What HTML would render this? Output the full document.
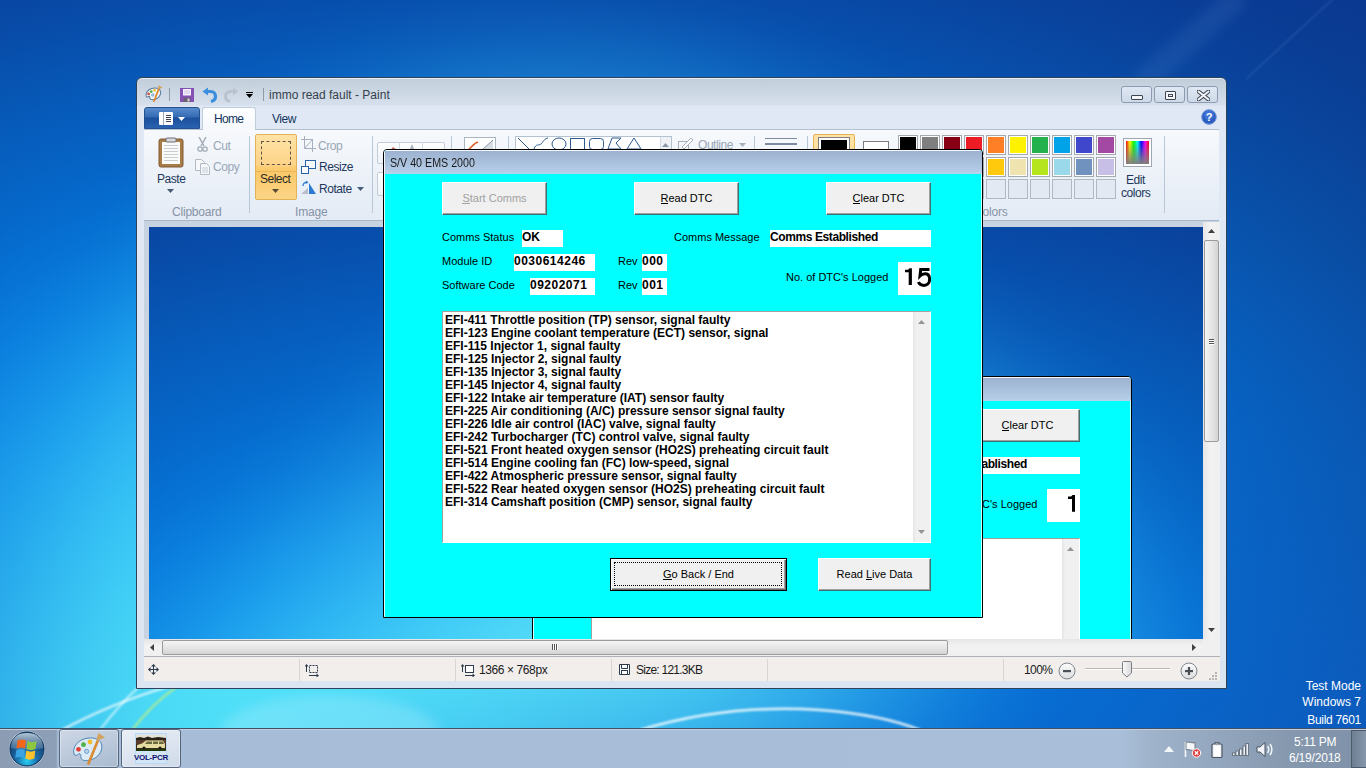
<!DOCTYPE html>
<html><head><meta charset="utf-8">
<style>
*{box-sizing:border-box;margin:0;padding:0}
html,body{width:1366px;height:768px;overflow:hidden;font-family:"Liberation Sans",sans-serif}
body{position:relative;background:#0b4fa8}
.a{position:absolute}
.deskbg{position:absolute;left:0;top:0;width:1366px;height:768px;overflow:hidden;
background:
 radial-gradient(ellipse 434px 606px at 197px 765px, rgba(101,255,254,0.733) 0%, rgba(101,255,254,0.700) 15%, rgba(101,255,254,0.607) 30%, rgba(101,255,254,0.466) 45%, rgba(101,255,254,0.300) 60%, rgba(101,255,254,0.191) 70%, rgba(101,255,254,0.095) 80%, rgba(101,255,254,0.037) 88%, rgba(101,255,254,0.010) 94%, rgba(101,255,254,0.000) 100%),
 radial-gradient(ellipse 549px 525px at 567px 487px, rgba(101,235,246,1.000) 0%, rgba(101,235,246,0.956) 15%, rgba(101,235,246,0.828) 30%, rgba(101,235,246,0.636) 45%, rgba(101,235,246,0.410) 60%, rgba(101,235,246,0.260) 70%, rgba(101,235,246,0.130) 80%, rgba(101,235,246,0.051) 88%, rgba(101,235,246,0.014) 94%, rgba(101,235,246,0.000) 100%),
 radial-gradient(ellipse 1353px 689px at 458px 469px, rgba(0,137,247,1.000) 0%, rgba(0,137,247,0.956) 15%, rgba(0,137,247,0.828) 30%, rgba(0,137,247,0.636) 45%, rgba(0,137,247,0.410) 60%, rgba(0,137,247,0.260) 70%, rgba(0,137,247,0.130) 80%, rgba(0,137,247,0.051) 88%, rgba(0,137,247,0.014) 94%, rgba(0,137,247,0.000) 100%),
 linear-gradient(180deg, rgb(10,56,144) 0%, rgb(12,60,140) 33.33%, rgb(14,69,155) 66.67%, rgb(14,84,181) 100%);}
/* paint window */
#pw{left:136px;top:77px;width:1091px;height:612px;border:1px solid #2e425a;border-radius:6px 6px 0 0;
 background:linear-gradient(#c1cdd9 0px,#cad6e2 12px,#d6e0ec 27px,#dfe8f4 28px,#dfe8f4 100px,#dbe5f1 100%);box-shadow:inset 0 1px 0 #e6edf5;overflow:hidden}
.t12{font-size:12px;white-space:nowrap;line-height:14px}
.sep{width:1px;background:#b8c6d6}
#ribbon{left:144px;top:129px;width:1075px;height:92px;border-top:1px solid #b3c0cf;border-bottom:1px solid #a8b8cb;
 background:linear-gradient(#f7f9fc 0%,#eef3f9 40%,#e4ebf5 100%)}
.glabel{color:#8593a6;font-size:12px;white-space:nowrap;letter-spacing:-.2px}
.rtxt{color:#1e395b;font-size:12px;white-space:nowrap;letter-spacing:-.45px}
.gtxt{color:#9aa6b6;font-size:12px;white-space:nowrap;letter-spacing:-.45px}
.sw{position:absolute;width:20px;height:20px;border:1px solid #a5a9ae;background:#fff;padding:1px}
.sw i{display:block;width:16px;height:16px}
.sw.e{background:#e3e9f2;border-color:#b0b8c4}
#canvasarea{left:144px;top:221px;width:1075px;height:436px;background:#c8d3e2}
#canvas{left:149px;top:227px;width:1054px;height:412px;overflow:hidden;background:#0b4fa8}
#vsb{left:1203px;top:222px;width:17px;height:417px;background:linear-gradient(90deg,#e6e6e6,#f2f2f2 40%,#f0f0f0)}
#hsb{left:144px;top:639px;width:1076px;height:17px;background:linear-gradient(#e6e6e6,#f2f2f2 40%,#f0f0f0)}
#status{left:144px;top:656px;width:1076px;height:25px;background:#f1eeec;border-top:1px solid #aeb2b8}
.sdiv{position:absolute;top:2px;width:1px;height:22px;background:#d9d6d2}
.st{position:absolute;top:6px;font-size:12px;color:#1b1b1b;white-space:nowrap}
.wbtn{position:absolute;width:31px;height:17px;border:1px solid #8c9bb0;border-radius:3px;background:linear-gradient(#dfe8f3,#cdd9e8)}
.wbtn i,.wbtn b{position:absolute;display:block;border:1.5px solid #3c4450;background:#f4f6f9}
.wbtn b{border-width:1px}
/* dialog */
.dlg{position:absolute;width:600px;height:469px;border:1px solid #000;border-radius:4px 4px 0 0;background:#00ffff;overflow:hidden}
.dlg .tb{position:absolute;left:0;top:0;width:598px;height:24px;background:linear-gradient(#9cb2d0,#b4cbe6 85%,#b8d4ec);border-top:1px solid #f4f8fc;border-left:1px solid #eef4fa}
.dlg .hl{position:absolute;left:0;top:24px;width:1px;height:445px;background:#d8ffff}
.dlg .hr{position:absolute;right:0;top:24px;width:1px;height:445px;background:#c8ffff}
.dlg .tt{position:absolute;left:6px;top:6px;font-size:12px;color:#1a1a1a;white-space:nowrap;transform:scaleX(.89);transform-origin:0 0}
.btn{position:absolute;height:33px;background:#f0f0f0;border-top:1px solid #fff;border-left:1px solid #fff;border-right:1px solid #3d7070;border-bottom:1px solid #3d7070;
 box-shadow:inset -1px -1px 0 #a0a0a0;font-size:11px;color:#000;text-align:center;line-height:30px;white-space:nowrap}
.btn u{text-decoration:none;border-bottom:1px solid currentColor;line-height:10px;display:inline-block}
.lbl{position:absolute;font-size:11px;color:#000;white-space:nowrap;line-height:12px}
.box{position:absolute;background:#fff;font-size:12px;font-weight:bold;color:#000;white-space:nowrap;line-height:15px;padding-left:0}
.box.n{letter-spacing:.5px}
.lst{position:absolute;background:#fff;border-top:1px solid #a0a0a0;border-left:1px solid #a0a0a0;border-right:1px solid #fff;border-bottom:1px solid #fff;overflow:hidden}
.lst .ln{font-size:12px;font-weight:bold;line-height:13px;white-space:nowrap;padding-left:2px}
.lst .up,.lst .dn{position:absolute;right:5px;width:7px;height:4px}
.lst .sb{position:absolute;right:0;top:0;width:17px;height:100%;background:linear-gradient(90deg,#e4e4e4,#f0f0f0 3px)}
.box.big{font-size:24px;font-weight:normal;-webkit-text-stroke:.7px #000;text-align:right;line-height:30px;padding-right:1px;letter-spacing:0}
.btn.def{border:1px solid #000;box-shadow:inset 1px 1px 0 #fff,inset -1px -1px 0 #696969,inset -2px -2px 0 #a0a0a0}
.focus{position:absolute;left:3px;top:3px;right:4px;bottom:4px;border:1px dotted #000}
.thumbv{border:1px solid #9b9b9b;border-radius:2px;background:linear-gradient(90deg,#f4f4f4,#e6e6e6 50%,#d4d4d4)}
.thumbh{border:1px solid #9b9b9b;border-radius:2px;background:linear-gradient(#f4f4f4,#e6e6e6 50%,#d4d4d4)}
.tbtn{border:1px solid #56667c;border-radius:3px;background:linear-gradient(160deg,#cdd8e6,#a9bad0);box-shadow:inset 0 0 0 1px rgba(255,255,255,.35)}
.tbtn.hi{background:linear-gradient(160deg,#e9eff7,#cfdae8)}
/* taskbar */
#tb{left:0;top:728px;width:1366px;height:40px;background:linear-gradient(90deg,#8b9cb3 0px,#8d9fb6 56px,#a7bcd6 58px,#a9bfd9 1120px,#9fb3cb 1150px,#8598ae 1290px,#7f91a8 100%);border-top:1px solid #3f5068;box-shadow:inset 0 1px 0 #c3cfdc}
.dt{position:absolute;color:#fff;font-size:12px;white-space:nowrap;text-align:right}
</style></head><body>
<div class="deskbg"></div>
<svg class="a" style="left:0;top:0" width="1366" height="728" viewBox="0 0 1366 728">
 <defs><filter id="bl1" x="-20%" y="-20%" width="140%" height="140%"><feGaussianBlur stdDeviation="1.2"/></filter>
 <filter id="bl2" x="-20%" y="-50%" width="140%" height="200%"><feGaussianBlur stdDeviation="6"/></filter></defs>
 <path d="M62 730 C95 712 130 698 170 686" stroke="#fff" stroke-width="2.2" fill="none" opacity=".8" filter="url(#bl1)"/>
 <path d="M100 730 C112 714 124 700 140 686" stroke="#fff" stroke-width="1.8" fill="none" opacity=".7" filter="url(#bl1)"/>
 <path d="M132 730 C146 712 160 698 178 686" stroke="#c8f07a" stroke-width="2" fill="none" opacity=".85" filter="url(#bl1)"/>
 <ellipse cx="330" cy="735" rx="110" ry="40" fill="#a8ecff" opacity=".35" filter="url(#bl2)"/>
 <path d="M640 730 C700 712 760 706 820 710 C860 713 895 720 920 730" stroke="#fff" stroke-width="2.5" fill="none" opacity=".85" filter="url(#bl1)"/>
 <path d="M1246 79 L1334 -2" stroke="#9cc4f0" stroke-width="1" fill="none" opacity=".3" filter="url(#bl1)"/>
 <path d="M1140 85 L1240 -5" stroke="#6fa0e0" stroke-width="24" fill="none" opacity=".12" filter="url(#bl2)"/>
</svg>

<!-- PAINT WINDOW -->
<div id="pw" class="a"></div>
<!-- title bar -->
<svg class="a" style="left:145px;top:85px" width="18" height="17" viewBox="12 4 34 33">
  <path d="M14.5 27 C12 22 15 14 24 11 C32 8.5 40 10.5 41.5 16 C43 21 40 28 33 31 C28 33 22 33.5 21 30 C20.5 28.5 21.5 26.5 20 25.8 C18.5 25.2 17 28.5 14.5 27 Z" fill="#eef5fb" stroke="#5a7a9a" stroke-width="2"/>
  <circle cx="18.5" cy="21.3" r="2.6" fill="#d04a3a"/><circle cx="23.5" cy="16.7" r="2.6" fill="#4fb046"/><circle cx="30" cy="14" r="2.6" fill="#f0bf30"/><circle cx="26.6" cy="23.4" r="2.4" fill="#b8d4ea" stroke="#5b8fc0" stroke-width="1.2"/>
  <path d="M29 35.5 L37.5 13.5" stroke="#e08a2a" stroke-width="3.5" stroke-linecap="round"/>
  <path d="M35.5 13 L38.5 4.5 L45.5 9.5 Z" fill="#d4a25c"/>
 </svg>
<div class="a sep" style="left:169px;top:88px;height:13px;background:#8d9aab"></div>
<svg class="a" style="left:180px;top:88px" width="14" height="14" viewBox="0 0 14 14">
 <rect x="0" y="0" width="14" height="14" fill="#8650b4"/><rect x="3" y="1" width="8" height="6.5" fill="#f4f0fa"/><path d="M4 3h6M4 5h6" stroke="#c8b8dc" stroke-width=".8"/><rect x="3.5" y="9.5" width="7" height="4.5" fill="#6a6070"/><rect x="7.5" y="10.5" width="2" height="3" fill="#d8d0e0"/>
</svg>
<svg class="a" style="left:202px;top:87px" width="16" height="16" viewBox="0 0 16 16">
 <path d="M5 4.5 H8.5 C12 4.5 13.5 7 13.5 9.5 C13.5 12 12 13.8 9 14.5" stroke="#3a8ede" stroke-width="3.2" fill="none"/>
 <path d="M0.5 4.5 L6 0.5 L6 8.5 Z" fill="#3a8ede"/>
</svg>
<svg class="a" style="left:223px;top:87px" width="16" height="16" viewBox="0 0 16 16">
 <path d="M11 4.5 H7.5 C4 4.5 2.5 7 2.5 9.5 C2.5 12 4 13.8 7 14.5" stroke="#b9c3ce" stroke-width="3.2" fill="none"/>
 <path d="M15.5 4.5 L10 0.5 L10 8.5 Z" fill="#b9c3ce"/>
</svg>
<div class="a" style="left:246px;top:92px;width:7px;height:1px;background:#000"></div>
<svg class="a" style="left:246px;top:94px" width="8" height="5"><path d="M0 0 L7 0 L3.5 4 Z" fill="#000"/></svg>
<div class="a sep" style="left:263px;top:88px;height:13px;background:#8d9aab"></div>
<div class="a t12" style="left:269px;top:88px;color:#363f4c">immo read fault - Paint</div>
<div class="a wbtn" style="left:1121px;top:86px"><i style="left:9px;top:8px;width:12px;height:5px;border-radius:1px"></i></div>
<div class="a wbtn" style="left:1154px;top:86px"><i style="left:10px;top:4px;width:11px;height:9px;border-radius:1px"></i><b style="left:13px;top:7px;width:5px;height:3px"></b></div>
<div class="a wbtn" style="left:1187px;top:86px">
 <svg class="a" style="left:9px;top:3px" width="13" height="11" viewBox="0 0 13 11"><path d="M1.5 1.5 L11.5 9.5 M11.5 1.5 L1.5 9.5" stroke="#3c4450" stroke-width="4" stroke-linecap="round"/><path d="M1.5 1.5 L11.5 9.5 M11.5 1.5 L1.5 9.5" stroke="#f4f6f9" stroke-width="2" stroke-linecap="round"/></svg>
</div>
<svg class="a" style="left:1201px;top:109px" width="16" height="16" viewBox="0 0 16 16">
 <circle cx="8" cy="8" r="7.3" fill="#2b5dc2" stroke="#6e95d6" stroke-width="1"/><circle cx="8" cy="6" r="5" fill="#4a7fdc" opacity=".6"/>
 <text x="8" y="12.2" text-anchor="middle" font-family="Liberation Sans" font-weight="bold" font-size="11" fill="#fff">?</text>
</svg>
<!-- tabs -->
<div class="a" style="left:144px;top:107px;width:56px;height:22px;border-radius:3px 3px 0 0;background:linear-gradient(#5a8ccc 0%,#336bb4 45%,#1d4f9c 50%,#2a62b0 100%);border:1px solid #21518f"></div>
<div class="a" style="left:159px;top:112px;width:14px;height:13px;background:#fff;border-radius:1px"></div>
<div class="a" style="left:163px;top:112px;width:1px;height:13px;background:#9ab"></div>
<div class="a" style="left:166px;top:115px;width:5px;height:1px;background:#445"></div>
<div class="a" style="left:166px;top:117px;width:5px;height:1px;background:#445"></div>
<div class="a" style="left:166px;top:119px;width:5px;height:1px;background:#445"></div>
<div class="a" style="left:166px;top:121px;width:5px;height:1px;background:#445"></div>
<svg class="a" style="left:178px;top:117px" width="7" height="4"><path d="M0 0 L7 0 L3.5 4 Z" fill="#fff"/></svg>
<div class="a" style="left:202px;top:107px;width:54px;height:23px;border:1px solid #bfcddd;border-bottom:none;border-radius:3px 3px 0 0;background:linear-gradient(#fdfeff,#f5f8fc)"></div>
<div class="a t12" style="left:214px;top:112px;color:#15355c;letter-spacing:-.7px">Home</div>
<div class="a t12" style="left:272px;top:112px;color:#15355c;letter-spacing:-.5px">View</div>
<!-- ribbon body -->
<div id="ribbon" class="a"></div>
<div class="a" style="left:203px;top:128px;width:52px;height:2px;background:#f7f9fc"></div>
<!-- clipboard group -->
<svg class="a" style="left:158px;top:136px" width="26" height="32" viewBox="0 0 26 32">
 <rect x="1" y="3" width="24" height="28" rx="2" fill="#a87c48" stroke="#7e5a30" stroke-width="1"/>
 <rect x="4" y="6" width="18" height="22" fill="#fbfbf9"/>
 <path d="M6 9.5h14M6 12.5h14M6 15.5h14M6 18.5h14M6 21.5h14M6 24.5h14" stroke="#c9ccd2" stroke-width="1"/>
 <rect x="8" y="2" width="10" height="4" rx="1" fill="#d7d9dd" stroke="#6b6f78" stroke-width="1"/>
</svg>
<div class="a rtxt" style="left:157px;top:172px">Paste</div>
<svg class="a" style="left:167px;top:189px" width="7" height="4"><path d="M0 0 L7 0 L3.5 4 Z" fill="#475b77"/></svg>
<svg class="a" style="left:197px;top:137px" width="11" height="15" viewBox="0 0 11 15">
 <path d="M2 0 L7 9 M9 0 L4 9" stroke="#a3adb9" stroke-width="1.5"/><circle cx="3" cy="12" r="2.2" fill="none" stroke="#a3adb9" stroke-width="1.3"/><circle cx="8" cy="12" r="2.2" fill="none" stroke="#a3adb9" stroke-width="1.3"/>
</svg>
<div class="a gtxt" style="left:213px;top:139px">Cut</div>
<svg class="a" style="left:194px;top:158px" width="17" height="17" viewBox="0 0 17 17">
 <path d="M1.5 1.5h6l3 3v8h-9z" fill="#f6f7f9" stroke="#b2bac5"/><path d="M6.5 5.5h6l3 3v8h-9z" fill="#f6f7f9" stroke="#b2bac5"/><path d="M8 10h6M8 12h6M8 14h6" stroke="#c5ccd5"/>
</svg>
<div class="a gtxt" style="left:213px;top:160px">Copy</div>
<div class="a glabel" style="left:172px;top:205px">Clipboard</div>
<div class="a sep" style="left:249px;top:136px;height:77px"></div>
<!-- image group -->
<div class="a" style="left:255px;top:134px;width:42px;height:66px;border:1px solid #e3b254;border-radius:2px;background:linear-gradient(#fee3a6 0%,#fdd489 45%,#fbc867 55%,#fcd587 100%)"></div>
<div class="a" style="left:256px;top:171px;width:40px;height:1px;background:#e6b660"></div>
<div class="a" style="left:261px;top:141px;width:30px;height:24px;border:1px dashed #5c5548"></div>
<div class="a t12" style="left:260px;top:172px;color:#2d2a24;letter-spacing:-.5px">Select</div>
<svg class="a" style="left:272px;top:189px" width="7" height="4"><path d="M0 0 L7 0 L3.5 4 Z" fill="#574a35"/></svg>
<svg class="a" style="left:301px;top:136px" width="15" height="16" viewBox="0 0 15 16">
 <path d="M3.5 0v12.5H15M0 3.5h11.5V16" fill="none" stroke="#a7b1bd" stroke-width="1"/><path d="M4 12 L12 3" stroke="#a7b1bd"/>
</svg>
<div class="a gtxt" style="left:318px;top:139px">Crop</div>
<svg class="a" style="left:301px;top:160px" width="15" height="14" viewBox="0 0 15 14">
 <rect x="4.5" y="0.5" width="10" height="8" fill="#f4f8fc" stroke="#2a62a8"/><rect x="0.5" y="6.5" width="7" height="7" fill="#fff" stroke="#2a62a8"/>
</svg>
<div class="a rtxt" style="left:319px;top:160px">Resize</div>
<svg class="a" style="left:300px;top:180px" width="17" height="15" viewBox="0 0 17 15">
 <path d="M1 14 L8 8 L8 14 Z" fill="#b8bfc8"/><path d="M9 14 L9 3 L16 14 Z" fill="#2d7bd0"/><path d="M3 6 C3 3 5 2 7 2.5" fill="none" stroke="#2d7bd0" stroke-width="1.3"/><path d="M6 0.5 L8.5 2.5 L5.5 4 Z" fill="#2d7bd0"/>
</svg>
<div class="a rtxt" style="left:319px;top:182px">Rotate</div>
<svg class="a" style="left:357px;top:187px" width="7" height="4"><path d="M0 0 L7 0 L3.5 4 Z" fill="#475b77"/></svg>
<div class="a glabel" style="left:295px;top:205px">Image</div>
<div class="a sep" style="left:372px;top:136px;height:77px"></div>
<!-- tools (mostly hidden) -->
<div class="a" style="left:377px;top:142px;width:68px;height:22px;border:1px solid #c3cdd9;border-radius:2px;background:linear-gradient(#fdfdfe,#eef2f7)"></div>
<div class="a" style="left:377px;top:172px;width:68px;height:24px;border:1px solid #c3cdd9;border-radius:2px;background:linear-gradient(#fdfdfe,#eef2f7)"></div>
<div class="a" style="left:399px;top:142px;width:1px;height:22px;background:#d0d8e2"></div><div class="a" style="left:422px;top:142px;width:1px;height:22px;background:#d0d8e2"></div><svg class="a" style="left:389px;top:145px" width="10" height="7"><path d="M1 6 L4 2 L7 4Z" fill="#c9675a"/></svg><svg class="a" style="left:407px;top:143px" width="10" height="9"><path d="M2 8 L5 1 L8 8Z" fill="#aab3bf"/></svg>
<div class="a sep" style="left:451px;top:136px;height:77px"></div>
<div class="a" style="left:464px;top:137px;width:32px;height:40px;border:1px solid #aab6c4;background:#fff"></div>
<svg class="a" style="left:466px;top:139px" width="28" height="12"><path d="M2 11 C6 8 8 4 12 3" stroke="#e0602a" stroke-width="1.5" fill="none"/><path d="M16 11 L27 1 L27 11 Z" fill="#d8dde4"/><path d="M16 11 L27 1" stroke="#8793a2"/></svg>
<div class="a sep" style="left:508px;top:136px;height:77px"></div>
<div class="a" style="left:515px;top:136px;width:157px;height:60px;border:1px solid #b6c2d0;background:#fff"></div>
<div class="a" style="left:660px;top:137px;width:11px;height:58px;background:#eef2f7;border-left:1px solid #d2d9e2"></div>
<svg class="a" style="left:662px;top:143px" width="7" height="4"><path d="M0 4 L7 4 L3.5 0 Z" fill="#8a96a6"/></svg>
<svg class="a" style="left:517px;top:137px" width="142" height="14" viewBox="0 0 142 14" fill="none" stroke="#2d5a8f" stroke-width="1">
 <path d="M1 1 L12 12"/><path d="M17 12 C19 6 22 9 24 7 S28 1 31 1"/><ellipse cx="42" cy="7" rx="7" ry="6"/><rect x="53.5" y="1.5" width="14" height="11"/><rect x="72.5" y="1.5" width="14" height="11" rx="3"/><path d="M91 12 L95 1 L104 1 L99 6 L104 12 Z"/><path d="M110 12 L117 1 L124 12 Z"/>
</svg>
<svg class="a" style="left:678px;top:137px" width="16" height="14" viewBox="0 0 16 14"><rect x="0.5" y="4.5" width="10" height="9" fill="none" stroke="#a7b1bd"/><path d="M4 10 L13 1 L15 3 L6 12 Z" fill="#fff" stroke="#a7b1bd"/></svg>
<div class="a gtxt" style="left:698px;top:138px">Outline</div>
<svg class="a" style="left:739px;top:143px" width="7" height="4"><path d="M0 0 L7 0 L3.5 4 Z" fill="#a7b1bd"/></svg>
<div class="a sep" style="left:754px;top:136px;height:77px"></div>
<div class="a" style="left:765px;top:138px;width:32px;height:1px;background:#7d8aa0"></div>
<div class="a" style="left:765px;top:143px;width:32px;height:2px;background:#7d8aa0"></div>
<div class="a sep" style="left:807px;top:136px;height:77px"></div>
<div class="a" style="left:813px;top:134px;width:42px;height:66px;border:1px solid #e3b254;border-radius:2px;background:linear-gradient(#fee3a6,#fcd17f)"></div>
<div class="a" style="left:818px;top:137px;width:32px;height:32px;border:1px solid #7d7d7d;background:#fff;padding:2px"><i style="display:block;width:26px;height:26px;background:#000"></i></div>
<div class="a" style="left:863px;top:141px;width:26px;height:26px;border:1px solid #7d7d7d;background:#fff"></div>
<div class="sw" style="left:898px;top:135px"><i style="background:#000000"></i></div>
<div class="sw" style="left:920px;top:135px"><i style="background:#7f7f7f"></i></div>
<div class="sw" style="left:942px;top:135px"><i style="background:#880015"></i></div>
<div class="sw" style="left:964px;top:135px"><i style="background:#ed1c24"></i></div>
<div class="sw" style="left:986px;top:135px"><i style="background:#ff7f27"></i></div>
<div class="sw" style="left:1008px;top:135px"><i style="background:#fff200"></i></div>
<div class="sw" style="left:1030px;top:135px"><i style="background:#22b14c"></i></div>
<div class="sw" style="left:1052px;top:135px"><i style="background:#00a2e8"></i></div>
<div class="sw" style="left:1074px;top:135px"><i style="background:#3f48cc"></i></div>
<div class="sw" style="left:1096px;top:135px"><i style="background:#a349a4"></i></div>
<div class="sw" style="left:898px;top:157px"><i style="background:#ffffff"></i></div>
<div class="sw" style="left:920px;top:157px"><i style="background:#c3c3c3"></i></div>
<div class="sw" style="left:942px;top:157px"><i style="background:#b97a57"></i></div>
<div class="sw" style="left:964px;top:157px"><i style="background:#ffaec9"></i></div>
<div class="sw" style="left:986px;top:157px"><i style="background:#ffc90e"></i></div>
<div class="sw" style="left:1008px;top:157px"><i style="background:#efe4b0"></i></div>
<div class="sw" style="left:1030px;top:157px"><i style="background:#b5e61d"></i></div>
<div class="sw" style="left:1052px;top:157px"><i style="background:#99d9ea"></i></div>
<div class="sw" style="left:1074px;top:157px"><i style="background:#7092be"></i></div>
<div class="sw" style="left:1096px;top:157px"><i style="background:#c8bfe7"></i></div>
<div class="sw e" style="left:898px;top:179px"></div>
<div class="sw e" style="left:920px;top:179px"></div>
<div class="sw e" style="left:942px;top:179px"></div>
<div class="sw e" style="left:964px;top:179px"></div>
<div class="sw e" style="left:986px;top:179px"></div>
<div class="sw e" style="left:1008px;top:179px"></div>
<div class="sw e" style="left:1030px;top:179px"></div>
<div class="sw e" style="left:1052px;top:179px"></div>
<div class="sw e" style="left:1074px;top:179px"></div>
<div class="sw e" style="left:1096px;top:179px"></div>
<div class="a" style="left:1123px;top:138px;width:29px;height:29px;border:1px solid #9da6b1;background:#fff;padding:2px"><i style="display:block;width:23px;height:23px;background:linear-gradient(rgba(255,255,255,0),rgba(128,128,128,1)),linear-gradient(90deg,#f00,#ff0,#0f0,#0ff,#00f,#f0f,#f00)"></i></div>
<div class="a rtxt" style="left:1126px;top:173px">Edit</div>
<div class="a rtxt" style="left:1121px;top:186px">colors</div>
<div class="a glabel" style="left:974px;top:205px">Colors</div>
<div class="a sep" style="left:1164px;top:136px;height:77px"></div>

<div id="canvasarea" class="a"></div>
<div id="canvas" class="a"><div class="deskbg"></div>
<div class="dlg" style="left:383px;top:149px">
 <div class="tb"></div><div class="hl"></div><div class="hr"></div>
 <div class="tt">S/V 40 EMS 2000</div>
 <div class="btn" style="left:58px;top:32px;width:105px;color:#a0a0a0"><u>S</u>tart Comms</div>
 <div class="btn" style="left:250px;top:32px;width:105px"><u>R</u>ead DTC</div>
 <div class="btn" style="left:442px;top:32px;width:105px"><u>C</u>lear DTC</div>
 <div class="lbl" style="left:58px;top:81px">Comms Status</div>
 <div class="box" style="left:138px;top:80px;width:41px;height:17px">OK</div>
 <div class="lbl" style="left:290px;top:81px">Comms Message</div>
 <div class="box" style="left:386px;top:80px;width:161px;height:17px;letter-spacing:-.4px">Comms Established</div>
 <div class="lbl" style="left:58px;top:105px">Module ID</div>
 <div class="box n" style="left:130px;top:104px;width:81px;height:17px">0030614246</div>
 <div class="lbl" style="left:234px;top:105px">Rev</div>
 <div class="box n" style="left:258px;top:104px;width:25px;height:17px">000</div>
 <div class="lbl" style="left:58px;top:129px">Software Code</div>
 <div class="box n" style="left:146px;top:128px;width:65px;height:17px">09202071</div>
 <div class="lbl" style="left:234px;top:129px">Rev</div>
 <div class="box n" style="left:258px;top:128px;width:25px;height:17px">001</div>
 <div class="lbl" style="left:402px;top:121px">No. of DTC's Logged</div>
 <div class="box big" style="left:514px;top:112px;width:33px;height:33px"><svg width="33" height="33" style="position:absolute;left:0;top:0" fill="none" stroke="#000" stroke-width="3"><path d="M21 7.5 H24 L25.5 6 H28 V22.8 H25 V10 H21Z" fill="#000" stroke="none"/></svg></div>
 <div class="lst" style="left:58px;top:161px;width:489px;height:232px">
  <div style="padding-top:2px">
  <div class="ln">EFI-411 Throttle position (TP) sensor, signal faulty</div>
  </div>
  <div class="sb"><svg class="up" style="top:8px" width="7" height="4"><path d="M0 4 L7 4 L3.5 0Z" fill="#959595"/></svg><svg class="dn" style="bottom:8px" width="7" height="4"><path d="M0 0 L7 0 L3.5 4Z" fill="#959595"/></svg></div>
 </div>
 <div class="btn def" style="left:226px;top:408px;width:177px"><u>G</u>o Back / End</div>
 <div class="btn" style="left:434px;top:408px;width:113px">Read <u>L</u>ive Data</div>
</div>

</div>
<div id="vsb" class="a">
 <svg class="a" style="left:5px;top:7px" width="7" height="4"><path d="M0 4 L7 4 L3.5 0 Z" fill="#404040"/></svg>
 <div class="a thumbv" style="left:1px;top:18px;width:15px;height:202px"></div>
 <div class="a" style="left:6px;top:117px;width:5px;height:1px;background:#555;box-shadow:0 2px 0 #555,0 4px 0 #555,0 1px 0 #fff,0 3px 0 #fff,0 5px 0 #fff"></div>
 <svg class="a" style="left:5px;top:406px" width="7" height="4"><path d="M0 0 L7 0 L3.5 4 Z" fill="#404040"/></svg>
</div>
<div id="hsb" class="a">
 <svg class="a" style="left:6px;top:5px" width="4" height="7"><path d="M4 0 L4 7 L0 3.5 Z" fill="#404040"/></svg>
 <div class="a thumbh" style="left:18px;top:1px;width:786px;height:15px"></div>
 <div class="a" style="left:408px;top:5px;width:1px;height:6px;background:#555;box-shadow:2px 0 0 #555,4px 0 0 #555,1px 0 0 #fff,3px 0 0 #fff,5px 0 0 #fff"></div>
 <svg class="a" style="left:1048px;top:5px" width="4" height="7"><path d="M0 0 L0 7 L4 3.5 Z" fill="#404040"/></svg>
</div>
<div class="a" style="left:1203px;top:639px;width:17px;height:17px;background:#f0f0f0"></div>
<div id="status" class="a">
 <svg class="a" style="left:4px;top:7px" width="11" height="11" viewBox="0 0 11 11" fill="#2b3a4d"><path d="M5 1h1v9H5zM1 5h9v1H1z"/><path d="M5.5 0 L8 2.5 H3z M5.5 11 L3 8.5 H8z M0 5.5 L2.5 3 V8z M11 5.5 L8.5 8 V3z"/></svg>
 <div class="sdiv" style="left:155px"></div>
 <svg class="a" style="left:161px;top:7px" width="14" height="13" viewBox="0 0 14 13"><path d="M1.5 1v7" stroke="#2b3a4d"/><path d="M1.5 0 L3.5 2.5 H-0.5z" fill="#2b3a4d"/><rect x="4.5" y="1.5" width="8" height="7" fill="none" stroke="#2b3a4d" stroke-dasharray="2 1"/><path d="M4 11.5h8" stroke="#2b3a4d"/><path d="M14 11.5 L11.5 9.5 V13.5z" fill="#2b3a4d"/></svg>
 <div class="sdiv" style="left:311px"></div>
 <svg class="a" style="left:317px;top:7px" width="14" height="13" viewBox="0 0 14 13"><path d="M1.5 1v7" stroke="#2b3a4d"/><path d="M1.5 0 L3.5 2.5 H-0.5z" fill="#2b3a4d"/><rect x="4.5" y="1.5" width="8" height="7" fill="#fff" stroke="#2b3a4d"/><path d="M4 11.5h8" stroke="#2b3a4d"/><path d="M14 11.5 L11.5 9.5 V13.5z" fill="#2b3a4d"/></svg>
 <div class="st" style="left:335px;letter-spacing:-.4px">1366 × 768px</div>
 <div class="sdiv" style="left:467px"></div>
 <svg class="a" style="left:475px;top:7px" width="11" height="11" viewBox="0 0 11 11"><path d="M.5 .5h10v10H.5z" fill="#fff" stroke="#2b3a4d"/><path d="M2.5 .5v4h6v-4" fill="none" stroke="#2b3a4d"/><rect x="2.5" y="6.5" width="6" height="4" fill="none" stroke="#2b3a4d"/></svg>
 <div class="st" style="left:492px;letter-spacing:-.75px">Size: 121.3KB</div>
 <div class="sdiv" style="left:623px"></div>
 <div class="sdiv" style="left:859px"></div>
 <div class="st" style="left:880px;letter-spacing:-.6px">100%</div>
 <svg class="a" style="left:914px;top:5px" width="18" height="18" viewBox="0 0 18 18"><circle cx="9" cy="9" r="8" fill="url(#zg)" stroke="#7f8790"/><rect x="5" y="8" width="8" height="2.2" fill="#4a4f56"/></svg>
 <div class="a" style="left:941px;top:11px;width:85px;height:2px;border-top:1px solid #b9b9b9;border-bottom:1px solid #fff"></div>
 <svg class="a" style="left:978px;top:4px" width="10" height="17" viewBox="0 0 10 17"><path d="M.5 1.5 Q.5 .5 1.5 .5 H8.5 Q9.5 .5 9.5 1.5 V12 L5 16 L.5 12 Z" fill="url(#tg)" stroke="#7b7f85"/></svg>
 <svg class="a" style="left:1036px;top:5px" width="18" height="18" viewBox="0 0 18 18"><circle cx="9" cy="9" r="8" fill="url(#zg)" stroke="#7f8790"/><rect x="5" y="8" width="8" height="2.2" fill="#4a4f56"/><rect x="7.9" y="5" width="2.2" height="8" fill="#4a4f56"/></svg>
 <svg class="a" style="left:1065px;top:15px" width="9" height="9" fill="#b8b5b0"><rect x="6" y="0" width="2" height="2"/><rect x="3" y="3" width="2" height="2"/><rect x="6" y="3" width="2" height="2"/><rect x="0" y="6" width="2" height="2"/><rect x="3" y="6" width="2" height="2"/><rect x="6" y="6" width="2" height="2"/></svg>
</div>
<svg width="0" height="0" style="position:absolute"><defs>
 <linearGradient id="zg" x1="0" y1="0" x2="0" y2="1"><stop offset="0" stop-color="#fdfdfd"/><stop offset="1" stop-color="#dcdcdc"/></linearGradient>
 <linearGradient id="tg" x1="0" y1="0" x2="1" y2="0"><stop offset="0" stop-color="#fafafa"/><stop offset="1" stop-color="#d8d8d8"/></linearGradient>
</defs></svg>


<!-- DIALOG -->
<div class="dlg" style="left:383px;top:149px">
 <div class="tb"></div><div class="hl"></div><div class="hr"></div>
 <div class="tt">S/V 40 EMS 2000</div>
 <div class="btn" style="left:58px;top:32px;width:105px;color:#a0a0a0"><u>S</u>tart Comms</div>
 <div class="btn" style="left:250px;top:32px;width:105px"><u>R</u>ead DTC</div>
 <div class="btn" style="left:442px;top:32px;width:105px"><u>C</u>lear DTC</div>
 <div class="lbl" style="left:58px;top:81px">Comms Status</div>
 <div class="box" style="left:138px;top:80px;width:41px;height:17px">OK</div>
 <div class="lbl" style="left:290px;top:81px">Comms Message</div>
 <div class="box" style="left:386px;top:80px;width:161px;height:17px;letter-spacing:-.4px">Comms Established</div>
 <div class="lbl" style="left:58px;top:105px">Module ID</div>
 <div class="box n" style="left:130px;top:104px;width:81px;height:17px">0030614246</div>
 <div class="lbl" style="left:234px;top:105px">Rev</div>
 <div class="box n" style="left:258px;top:104px;width:25px;height:17px">000</div>
 <div class="lbl" style="left:58px;top:129px">Software Code</div>
 <div class="box n" style="left:146px;top:128px;width:65px;height:17px">09202071</div>
 <div class="lbl" style="left:234px;top:129px">Rev</div>
 <div class="box n" style="left:258px;top:128px;width:25px;height:17px">001</div>
 <div class="lbl" style="left:402px;top:121px">No. of DTC's Logged</div>
 <div class="box big" style="left:514px;top:112px;width:33px;height:33px"><svg width="33" height="33" style="position:absolute;left:0;top:0" fill="none" stroke="#000" stroke-width="3"><path d="M7 7.7 H10 L11.5 6.2 H13.9 V22.9 H10.7 V10.2 H7Z" fill="#000" stroke="none"/><path d="M31.5 7.5 H22.7 L22 14 C23.5 12.5 25.3 11.8 27 11.8 C30.2 11.8 31.6 14.5 31.6 17.5 C31.6 21 29.2 23.4 26 23.4 C23.2 23.4 21.3 22.2 20.4 20"/></svg></div>
 <div class="lst" style="left:58px;top:161px;width:489px;height:232px">
  <div style="padding-top:2px">
  <div class="ln">EFI-411 Throttle position (TP) sensor, signal faulty</div>
  <div class="ln">EFI-123 Engine coolant temperature (ECT) sensor, signal</div>
  <div class="ln">EFI-115 Injector 1, signal faulty</div>
  <div class="ln">EFI-125 Injector 2, signal faulty</div>
  <div class="ln">EFI-135 Injector 3, signal faulty</div>
  <div class="ln">EFI-145 Injector 4, signal faulty</div>
  <div class="ln">EFI-122 Intake air temperature (IAT) sensor faulty</div>
  <div class="ln">EFI-225 Air conditioning (A/C) pressure sensor signal faulty</div>
  <div class="ln">EFI-226 Idle air control (IAC) valve, signal faulty</div>
  <div class="ln">EFI-242 Turbocharger (TC) control valve, signal faulty</div>
  <div class="ln">EFI-521 Front heated oxygen sensor (HO2S) preheating circuit fault</div>
  <div class="ln">EFI-514 Engine cooling fan (FC) low-speed, signal</div>
  <div class="ln">EFI-422 Atmospheric pressure sensor, signal faulty</div>
  <div class="ln">EFI-522 Rear heated oxygen sensor (HO2S) preheating circuit fault</div>
  <div class="ln">EFI-314 Camshaft position (CMP) sensor, signal faulty</div>
  </div>
  <div class="sb"><svg class="up" style="top:8px" width="7" height="4"><path d="M0 4 L7 4 L3.5 0Z" fill="#959595"/></svg><svg class="dn" style="bottom:8px" width="7" height="4"><path d="M0 0 L7 0 L3.5 4Z" fill="#959595"/></svg></div>
 </div>
 <div class="btn def" style="left:226px;top:408px;width:177px"><span class="focus"></span><u>G</u>o Back / End</div>
 <div class="btn" style="left:434px;top:408px;width:113px">Read <u>L</u>ive Data</div>
</div>

<!-- TASKBAR -->
<div id="tb" class="a">
 <svg class="a" style="left:8px;top:1px" width="38" height="38" viewBox="0 0 38 38">
  <defs>
   <radialGradient id="orb" cx=".5" cy=".85" r=".7"><stop offset="0" stop-color="#25d0f5"/><stop offset=".45" stop-color="#1c6aa8"/><stop offset="1" stop-color="#0f3d6e"/></radialGradient>
   <linearGradient id="orbt" x1="0" y1="0" x2="0" y2="1"><stop offset="0" stop-color="#e8f0f6" stop-opacity=".95"/><stop offset="1" stop-color="#7f9fb8" stop-opacity=".5"/></linearGradient>
  </defs>
  <circle cx="19" cy="19" r="18" fill="#c7dcef" opacity=".7"/>
  <circle cx="19" cy="19" r="17" fill="url(#orb)" stroke="#0d2f52" stroke-width="1"/>
  <path d="M3 18 C3 7 10 3 19 3 C28 3 35 7 35 18 C28 20 10 20 3 18Z" fill="url(#orbt)" opacity=".8"/>
  <path d="M9.5 10.5 C12 9 15 9 18 10.5 L17 18.5 C14 17 12 17 8.5 18.5Z" fill="#f2661e"/>
  <path d="M19.5 11 C22 12.5 25 12.5 28.5 11 L27.5 19 C24.5 20.5 22 20.5 18.5 19Z" fill="#8dc63f"/>
  <path d="M8.3 20 C11 18.5 14 18.5 17 20 L16 28 C13 26.5 10.5 26.5 7.3 28Z" fill="#38a2e2"/>
  <path d="M18.3 20.5 C21.5 22 24 22 27.3 20.5 L26.3 28.5 C23 30 20.5 30 17.3 28.5Z" fill="#fcc22c"/>
 </svg>
 <div class="a tbtn" style="left:59px;top:0px;width:60px;height:39px"></div>
 <svg class="a" style="left:60px;top:-1px" width="60" height="40" viewBox="0 0 60 40">
  <path d="M14.5 27 C12 22 15 14 24 11 C32 8.5 40 10.5 41.5 16 C43 21 40 28 33 31 C28 33 22 33.5 21 30 C20.5 28.5 21.5 26.5 20 25.8 C18.5 25.2 17 28.5 14.5 27 Z" fill="#dcebf6" stroke="#4f86b5" stroke-width="1"/>
  <circle cx="18.5" cy="21.3" r="2.4" fill="#e0403a"/><circle cx="23.5" cy="16.7" r="2.4" fill="#4fb046"/><circle cx="30" cy="14" r="2.4" fill="#f0bf30"/><circle cx="26.6" cy="23.4" r="2.1" fill="#b8d4ea" stroke="#5b8fc0" stroke-width=".8"/>
  <path d="M28.5 35.5 L37.5 13.5" stroke="#d98a32" stroke-width="2.6" stroke-linecap="round"/>
  <path d="M36 13 L38.5 5 L45 9.5 Z" fill="#d4a25c"/>
 </svg>
 <div class="a tbtn hi" style="left:121px;top:0px;width:60px;height:39px"></div>
 <div class="a" style="left:135px;top:4px;width:32px;height:31px;background:#d2e6f7;border:1px solid #bcd8f0"></div>
 <svg class="a" style="left:136px;top:6px" width="30" height="16" viewBox="0 0 30 16">
  <rect x="0" y="0" width="30" height="16" fill="#3b2a1a"/>
  <rect x="0" y="0" width="30" height="3" fill="#e6e2d6"/>
  <path d="M0 3 L4 2 L8 3 L12 1.5 L16 3 L22 2 L30 3 V5 H0Z" fill="#2a2418"/>
  <rect x="0" y="5" width="30" height="4" fill="#5a3a2a"/>
  <path d="M1 10 L6 8.5 L10 5.5 L27 5.5 L29 9 L29 13 L1 13Z" fill="#e4dca0"/>
  <path d="M11 6.5 L16 6.5 L16 9 L9 9Z M17 6.5 L22 6.5 L22 9 L17 9Z M23 6.5 L27 6.5 L28 9 L23 9Z" fill="#6a6a40"/>
  <circle cx="8" cy="13" r="1.6" fill="#1a1a10"/><circle cx="24" cy="13" r="1.6" fill="#1a1a10"/>
  <rect x="0" y="14" width="30" height="2" fill="#24380e"/>
 </svg>
 <div class="a" style="left:134px;top:24px;width:34px;font-size:8px;font-weight:bold;color:#10106e;text-align:center;letter-spacing:-.3px;white-space:nowrap;line-height:10px">VOL-PCR</div>
 <svg class="a" style="left:1164px;top:17px" width="10" height="6"><path d="M0 6 L10 6 L5 0Z" fill="#f4f7fa"/></svg>
 <svg class="a" style="left:1184px;top:12px" width="18" height="17" viewBox="0 0 18 17">
  <path d="M1.5 1 V16" stroke="#f4f7fa" stroke-width="1.6"/><path d="M2 1.5 C5 0 8 3 11 1.5 V9 C8 10.5 5 7.5 2 9Z" fill="#f4f7fa" stroke="#5a6470" stroke-width=".8"/>
  <circle cx="12.5" cy="12" r="4.2" fill="#e23b3b" stroke="#fff" stroke-width="1"/><path d="M10.8 10.3 L14.2 13.7 M14.2 10.3 L10.8 13.7" stroke="#fff" stroke-width="1.3"/>
 </svg>
 <svg class="a" style="left:1211px;top:13px" width="12" height="16" viewBox="0 0 12 16"><rect x="4" y="0.5" width="4" height="2" fill="#e8eef4" stroke="#4a5460" stroke-width=".8"/><rect x="1" y="2" width="10" height="13.5" rx="1.5" fill="#eef3f8" stroke="#4a5460" stroke-width="1.2"/><rect x="3" y="4" width="6" height="10" fill="#fff"/></svg>
 <svg class="a" style="left:1232px;top:14px" width="17" height="13" viewBox="0 0 17 13" fill="#eef3f8" stroke="#59636e" stroke-width=".8"><rect x=".5" y="10" width="2.5" height="2.5"/><rect x="4" y="8" width="2.5" height="4.5"/><rect x="7.5" y="6" width="2.5" height="6.5"/><rect x="11" y="3" width="2.5" height="9.5"/><rect x="14" y=".5" width="2.5" height="12"/></svg>
 <svg class="a" style="left:1256px;top:12px" width="18" height="17" viewBox="0 0 18 17"><path d="M1 6 H4 L9 1.5 V15.5 L4 11 H1Z" fill="#f1f5f9" stroke="#4a5460" stroke-width="1"/><path d="M11.5 5 C13 7 13 10 11.5 12" fill="none" stroke="#f1f5f9" stroke-width="1.5"/><path d="M14 3 C16.5 6 16.5 11 14 14" fill="none" stroke="#f1f5f9" stroke-width="1.5"/></svg>
 <div class="a" style="left:1294px;top:6px;font-size:12px;color:#fff;letter-spacing:-.2px;white-space:nowrap">5:11 PM</div>
 <div class="a" style="left:1289px;top:22px;font-size:12px;color:#fff;letter-spacing:-.2px;white-space:nowrap">6/19/2018</div>
 <div class="a" style="left:1351px;top:1px;width:15px;height:38px;background:linear-gradient(90deg,#6f7f93,#8696ab);border:1px solid #4d5a6a;border-right:none"></div>
</div>
<div class="dt" style="left:1260px;top:679px;width:101px">Test Mode</div>
<div class="dt" style="left:1260px;top:695px;width:101px">Windows 7</div>
<div class="dt" style="left:1260px;top:713px;width:101px;letter-spacing:-.3px">Build 7601</div>

</body></html>
